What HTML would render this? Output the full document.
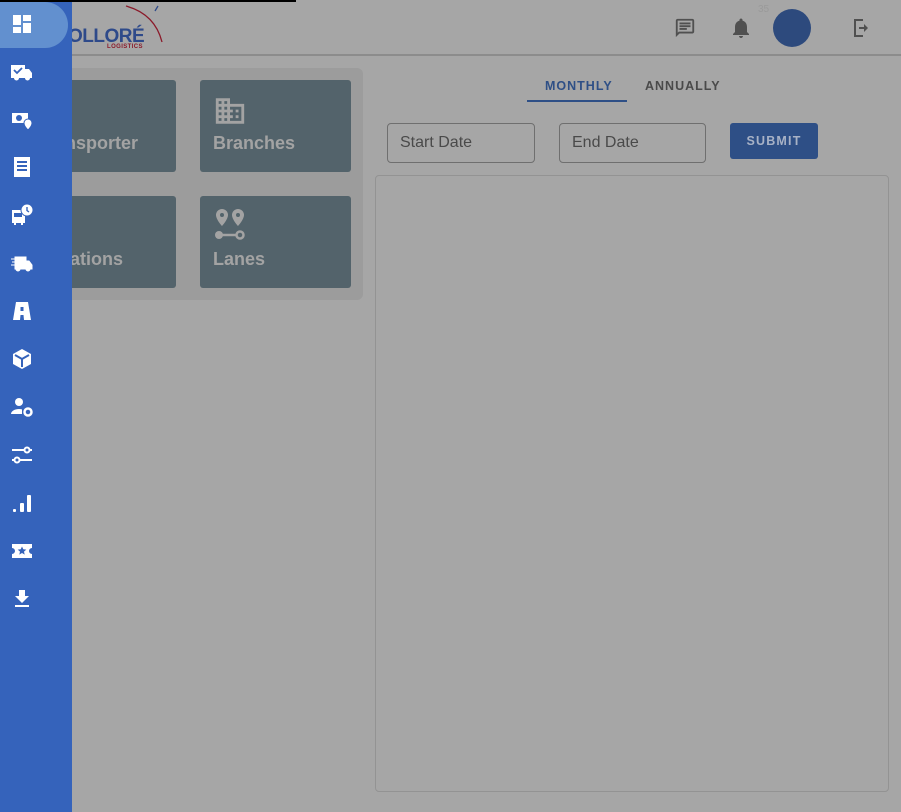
<!DOCTYPE html>
<html><head><style>
*{box-sizing:border-box;margin:0;padding:0}
body{width:901px;height:812px;overflow:hidden;background:#a6a6a6;font-family:"Liberation Sans",Roboto,sans-serif;position:relative}
.topline{position:absolute;left:0;top:0;width:296px;height:2px;background:#000;z-index:5}
.header{position:absolute;left:0;top:0;width:901px;height:56px;border-bottom:2px solid #8c8c8c;background:#a6a6a6}
.side{position:absolute;left:0;top:0;width:72px;height:812px;background:#3563bb;z-index:3}
.sel{position:absolute;left:0;top:2px;width:68px;height:46px;background:#6290cf;border-radius:0 24px 24px 0}
.ic{position:absolute;left:10px;width:24px;height:24px}
.panel{position:absolute;left:60px;top:68px;width:303px;height:232px;background:#9c9c9c;border-radius:6px}
.card{position:absolute;width:151px;height:92px;background:#53636b;border-radius:3px;color:#a3a3a3;font-weight:bold;font-size:18px}
.card span{position:absolute;left:13px;bottom:18px}
.tab{position:absolute;top:79px;font-size:12.5px;font-weight:bold;letter-spacing:1px}
.inp{position:absolute;top:123px;height:40px;border:1px solid #6f6f6f;border-radius:4px;font-size:16px;color:#4a4a4a;padding:10px 12px}
.btn{position:absolute;left:730px;top:123px;width:88px;height:36px;background:#2e4f86;border-radius:3px;color:#a8b2c6;font-size:12.5px;font-weight:bold;letter-spacing:1.2px;text-align:center;line-height:36px}
.chart{position:absolute;left:375px;top:175px;width:514px;height:617px;border:1px solid #939393;border-radius:4px}
</style></head><body>
<div class="topline"></div>
<div class="header">
 <div style="position:absolute;left:68px;top:26px;font-size:19px;font-weight:bold;color:#2e4a8a;letter-spacing:-0.5px">OLLORÉ</div>
 <div style="position:absolute;left:107px;top:44px;font-size:6px;font-weight:bold;color:#8b1a2a;letter-spacing:.4px">LOGISTICS</div>
 <svg style="position:absolute;left:120px;top:4px" width="45" height="40"><path d="M6 2 Q35 10 42 38" stroke="#8b1a2a" stroke-width="1.3" fill="none"/><path d="M35 7 L38 2" stroke="#2e4a8a" stroke-width="1.3"/></svg>
 <svg style="position:absolute;left:674px;top:17px" width="22" height="22" viewBox="0 0 24 24"><path d="M20 2H4c-1.1 0-2 .9-2 2v18l4-4h14c1.1 0 2-.9 2-2V4c0-1.1-.9-2-2-2zm0 14H5.2L4 17.2V4h16v12zM6 12h8v2H6zm0-3h12v2H6zm0-3h12v2H6z" fill="#505050"/></svg>
 <svg style="position:absolute;left:729px;top:16px" width="24" height="24" viewBox="0 0 24 24"><path d="M12 22c1.1 0 2-.9 2-2h-4c0 1.1.9 2 2 2zm6-6v-5c0-3.07-1.63-5.64-4.5-6.32V4c0-.83-.67-1.5-1.5-1.5s-1.5.67-1.5 1.5v.68C7.64 5.36 6 7.92 6 11v5l-2 2v1h16v-1l-2-2z" fill="#505050"/></svg>
 <div style="position:absolute;left:758px;top:4px;font-size:10px;color:#9a9a9a">35</div>
 <div style="position:absolute;left:773px;top:9px;width:38px;height:38px;border-radius:50%;background:#2d4a7d"></div>
 <svg style="position:absolute;left:849px;top:16px" width="24" height="24" viewBox="0 0 24 24"><path d="M14 3H5v18h9v-2H7V5h7z M15 8l4 4-4 4v-3H10v-2h5z" fill="#505050"/></svg>
</div>
<div class="side">
 <div class="sel"></div>
 <svg class="ic" style="top:12px" viewBox="0 0 24 24"><path d="M3 13h8V3H3v10zm0 8h8v-6H3v6zm10 0h8V11h-8v10zm0-18v6h8V3h-8z" fill="#fff"/></svg>
 <svg class="ic" style="top:60px" viewBox="0 0 24 24"><path d="M1 5h14v4h4l3 4v5h-2a2.5 2.5 0 0 1-5 0H9a2.5 2.5 0 0 1-5 0H1z" fill="#fff"/><path d="M4 10l3 3 5-5" stroke="#3563bb" stroke-width="1.8" fill="none"/></svg>
 <svg class="ic" style="top:108px" viewBox="0 0 24 24"><path d="M2 5h16v10H2z" fill="#fff"/><circle cx="9" cy="10" r="3" fill="#3563bb"/><path d="M18 11c-2.2 0-4 1.8-4 4 0 3 4 7 4 7s4-4 4-7c0-2.2-1.8-4-4-4z" fill="#fff" stroke="#3563bb"/></svg>
 <svg class="ic" style="top:155px" viewBox="0 0 24 24"><path d="M4 2h16v20H4z" fill="#fff"/><path d="M7 7h10M7 11h10M7 15h10" stroke="#3563bb" stroke-width="2"/></svg>
 <svg class="ic" style="top:203px" viewBox="0 0 24 24"><path d="M2 7h13v13h-2v2h-2v-2H6v2H4v-2H2z" fill="#fff"/><circle cx="17" cy="7" r="6" fill="#fff" stroke="#3563bb"/><path d="M17 4v3.5l2 1.5" stroke="#3563bb" stroke-width="1.4" fill="none"/><path d="M4 10h8v4H4z" fill="#3563bb"/></svg>
 <svg class="ic" style="top:251px" viewBox="0 0 24 24"><path d="M6 6h10v4h3l3 4v4h-2a2 2 0 0 1-4 0H10a2 2 0 0 1-4 0H5V6z M1 8h4M2 11h3M1 14h4" fill="#fff" stroke="#fff"/></svg>
 <svg class="ic" style="top:299px" viewBox="0 0 24 24"><path d="M6 3h12l3 18h-7l-.5-5h-3l-.5 5H3z" fill="#fff"/><path d="M10.5 8h3v4h-3z" fill="#3563bb"/></svg>
 <svg class="ic" style="top:347px" viewBox="0 0 24 24"><path d="M12 2l9 5v10l-9 5-9-5V7z" fill="#fff"/><path d="M5 8l7 4 7-4M12 12v8" stroke="#3563bb" stroke-width="2" fill="none"/></svg>
 <svg class="ic" style="top:395px" viewBox="0 0 24 24"><circle cx="9" cy="7" r="4" fill="#fff"/><path d="M1 19c0-3 4-5 8-5 1 0 2 .1 3 .4V19z" fill="#fff"/><circle cx="18" cy="17" r="3.5" fill="none" stroke="#fff" stroke-width="2.5"/></svg>
 <svg class="ic" style="top:443px" viewBox="0 0 24 24"><path d="M2 7h13M19 7h3M2 17h3M9 17h13" stroke="#fff" stroke-width="2"/><circle cx="17" cy="7" r="2.5" fill="none" stroke="#fff" stroke-width="2"/><circle cx="7" cy="17" r="2.5" fill="none" stroke="#fff" stroke-width="2"/></svg>
 <svg class="ic" style="top:491px" viewBox="0 0 24 24"><rect x="3" y="18" width="3" height="3" rx="1" fill="#fff"/><rect x="10" y="12" width="4" height="9" rx="1" fill="#fff"/><rect x="17" y="4" width="4" height="17" rx="1" fill="#fff"/></svg>
 <svg class="ic" style="top:539px" viewBox="0 0 24 24"><path d="M2 5h20v4a3 3 0 0 0 0 6v4H2v-4a3 3 0 0 0 0-6z" fill="#fff"/><path d="M12 7.5l1.3 2.8 3 .3-2.3 2 .7 3-2.7-1.6-2.7 1.6.7-3-2.3-2 3-.3z" fill="#3563bb"/></svg>
 <svg class="ic" style="top:587px" viewBox="0 0 24 24"><path d="M19 9h-4V3H9v6H5l7 7 7-7zM5 18v2h14v-2z" fill="#fff"/></svg>
</div>
<div class="panel"></div>
<div class="card" style="left:25px;top:80px"><span>Transporter</span></div>
<div class="card" style="left:200px;top:80px">
 <svg style="position:absolute;left:13px;top:14px" width="34" height="34" viewBox="0 0 24 24"><path d="M12 7V3H2v18h20V7H12zM6 19H4v-2h2v2zm0-4H4v-2h2v2zm0-4H4V9h2v2zm0-4H4V5h2v2zm4 12H8v-2h2v2zm0-4H8v-2h2v2zm0-4H8V9h2v2zm0-4H8V5h2v2zm10 12h-8v-2h2v-2h-2v-2h2v-2h-2V9h8v10zm-2-8h-2v2h2v-2zm0 4h-2v2h2v-2z" fill="#a3a3a3"/></svg>
 <span>Branches</span></div>
<div class="card" style="left:25px;top:196px"><span>Locations</span></div>
<div class="card" style="left:200px;top:196px">
 <svg style="position:absolute;left:13px;top:12px" width="34" height="34" viewBox="0 0 34 34"><path d="M9 1a6 6 0 0 0-6 6c0 4.5 6 11 6 11s6-6.5 6-11a6 6 0 0 0-6-6z M25 1a6 6 0 0 0-6 6c0 4.5 6 11 6 11s6-6.5 6-11a6 6 0 0 0-6-6z" fill="#a3a3a3"/><circle cx="9" cy="7" r="2" fill="#53636b"/><circle cx="25" cy="7" r="2" fill="#53636b"/><circle cx="6" cy="27" r="4" fill="#a3a3a3"/><circle cx="27" cy="27" r="3.5" fill="none" stroke="#a3a3a3" stroke-width="2.5"/><path d="M9 27h15" stroke="#a3a3a3" stroke-width="2.5"/></svg>
 <span>Lanes</span></div>
<div class="tab" style="left:545px;color:#2e4f86">MONTHLY</div>
<div style="position:absolute;left:527px;top:100px;width:100px;height:2px;background:#2e4f86"></div>
<div class="tab" style="left:645px;color:#4a4a4a">ANNUALLY</div>
<div class="inp" style="left:387px;width:148px">Start Date</div>
<div class="inp" style="left:559px;width:147px">End Date</div>
<div class="btn">SUBMIT</div>
<div class="chart"></div>
</body></html>
